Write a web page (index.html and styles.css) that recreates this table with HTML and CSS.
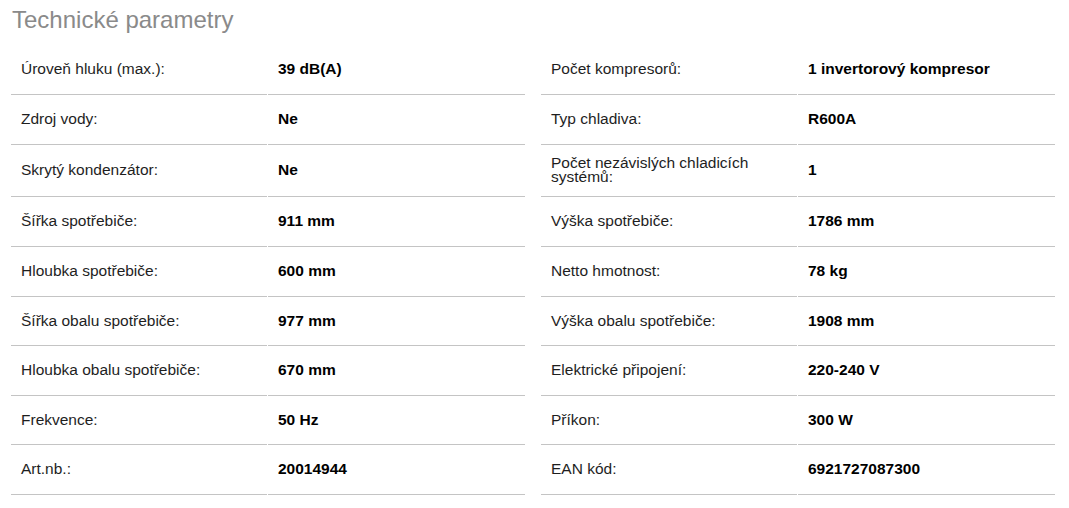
FILE: index.html
```html
<!DOCTYPE html>
<html lang="cs">
<head>
<meta charset="utf-8">
<title>Technické parametry</title>
<link rel="stylesheet" href="styles.css">
</head>
<body>
<section class="specs">
  <h2 class="specs-title">Technické parametry</h2>
  <div class="specs-cols">
    <div class="spec-table">
      <div class="spec-row"><div class="spec-label">Úroveň hluku (max.):</div><div class="spec-value">39 dB(A)</div></div>
      <div class="spec-row"><div class="spec-label">Zdroj vody:</div><div class="spec-value">Ne</div></div>
      <div class="spec-row tall"><div class="spec-label">Skrytý kondenzátor:</div><div class="spec-value">Ne</div></div>
      <div class="spec-row"><div class="spec-label">Šířka spotřebiče:</div><div class="spec-value">911 mm</div></div>
      <div class="spec-row"><div class="spec-label">Hloubka spotřebiče:</div><div class="spec-value">600 mm</div></div>
      <div class="spec-row"><div class="spec-label">Šířka obalu spotřebiče:</div><div class="spec-value">977 mm</div></div>
      <div class="spec-row"><div class="spec-label">Hloubka obalu spotřebiče:</div><div class="spec-value">670 mm</div></div>
      <div class="spec-row"><div class="spec-label">Frekvence:</div><div class="spec-value">50 Hz</div></div>
      <div class="spec-row"><div class="spec-label">Art.nb.:</div><div class="spec-value">20014944</div></div>
    </div>
    <div class="spec-table">
      <div class="spec-row"><div class="spec-label">Počet kompresorů:</div><div class="spec-value">1 invertorový kompresor</div></div>
      <div class="spec-row"><div class="spec-label">Typ chladiva:</div><div class="spec-value">R600A</div></div>
      <div class="spec-row tall"><div class="spec-label">Počet nezávislých chladicích systémů:</div><div class="spec-value">1</div></div>
      <div class="spec-row"><div class="spec-label">Výška spotřebiče:</div><div class="spec-value">1786 mm</div></div>
      <div class="spec-row"><div class="spec-label">Netto hmotnost:</div><div class="spec-value">78 kg</div></div>
      <div class="spec-row"><div class="spec-label">Výška obalu spotřebiče:</div><div class="spec-value">1908 mm</div></div>
      <div class="spec-row"><div class="spec-label">Elektrické připojení:</div><div class="spec-value">220-240 V</div></div>
      <div class="spec-row"><div class="spec-label">Příkon:</div><div class="spec-value">300 W</div></div>
      <div class="spec-row"><div class="spec-label">EAN kód:</div><div class="spec-value">6921727087300</div></div>
    </div>
  </div>
</section>
</body>
</html>
```
FILE: styles.css
```css
html, body {
  margin: 0;
  padding: 0;
  background: #ffffff;
}

body {
  font-family: "Liberation Sans", Arial, Helvetica, sans-serif;
  color: #1a1a1a;
}

.specs {
  padding: 0 14px 0 11px;
}

.specs-title {
  margin: 0 0 12.8px 1px;
  padding-top: 6.6px;
  font-size: 24px;
  line-height: 26px;
  font-weight: normal;
  color: #8a8a8a;
}

.specs-cols {
  display: flex;
  gap: 16px;
}

.spec-table {
  flex: 0 0 514px;
  display: flex;
  flex-direction: column;
}

.spec-row {
  display: grid;
  grid-template-columns: 256px 1fr;
  column-gap: 1px;
  min-height: 49.6px;
}

.spec-row.tall {
  min-height: 52.8px;
}

.spec-label,
.spec-value {
  box-sizing: border-box;
  display: flex;
  align-items: center;
  padding: 11px 10px 11px 10px;
  border-bottom: 1px solid #c4c4c4;
  font-size: 15.5px;
  line-height: 14.4px;
}

.spec-label {
  color: #1e1e1e;
}

.spec-value {
  font-weight: bold;
  color: #000000;
}
```
